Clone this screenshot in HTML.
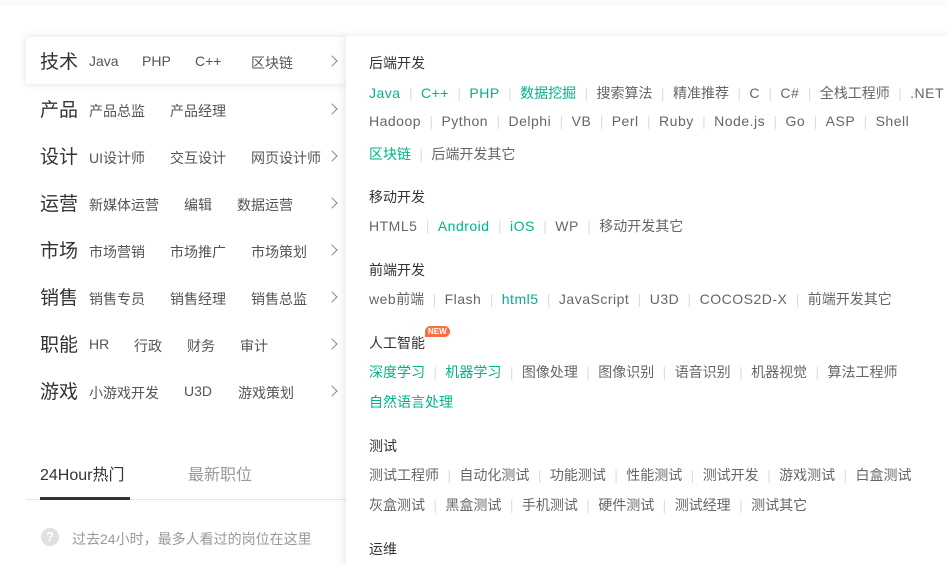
<!DOCTYPE html>
<html><head><meta charset="utf-8"><style>
*{margin:0;padding:0;box-sizing:border-box}
body{width:947px;height:548px;overflow:hidden;background:#fff;font-family:"Liberation Sans","Noto Sans CJK SC",sans-serif;position:relative;color:#333}
.top{position:absolute;left:0;top:0;width:947px;height:6px;background:#fafafa}
.row{position:absolute;left:26px;width:320px;height:47px;font-size:14px;color:#555}
.row.act{background:#fff;box-shadow:0 0 8px rgba(0,0,0,.12);z-index:1}
.row .cat{position:absolute;left:14px;top:10px;font-size:19px;color:#333}
.row span.s{position:absolute;top:16px}
.row .ch{position:absolute;left:302px;top:20px;width:8px;height:8px;border-right:1.3px solid #888;border-top:1.3px solid #888;transform:rotate(45deg)}
.right{position:absolute;left:346px;top:36px;width:620px;height:530px;background:#fff;box-shadow:-3px 0 8px rgba(0,0,0,.08);z-index:2}
.h{position:absolute;left:23px;font-size:14px;color:#333}
.l{position:absolute;left:23px;font-size:14px;color:#666;white-space:nowrap}
.l i{font-style:normal;color:#ddd;margin:0 8.4px}
.l b{font-weight:normal;letter-spacing:.5px}
.g{color:#00b38a}
.tab{position:absolute;font-size:16px}
</style></head><body>
<div class="top"></div>
<div class="row act" style="top:37px"><span class="cat">技术</span><span class="s" style="left:63px">Java</span><span class="s" style="left:116px">PHP</span><span class="s" style="left:169px">C++</span><span class="s" style="left:225px">区块链</span><b class="ch"></b></div>
<div class="row" style="top:85px"><span class="cat">产品</span><span class="s" style="left:63px">产品总监</span><span class="s" style="left:144px">产品经理</span><b class="ch"></b></div>
<div class="row" style="top:132px"><span class="cat">设计</span><span class="s" style="left:63px">UI设计师</span><span class="s" style="left:144px">交互设计</span><span class="s" style="left:225px">网页设计师</span><b class="ch"></b></div>
<div class="row" style="top:179px"><span class="cat">运营</span><span class="s" style="left:63px">新媒体运营</span><span class="s" style="left:158px">编辑</span><span class="s" style="left:211px">数据运营</span><b class="ch"></b></div>
<div class="row" style="top:226px"><span class="cat">市场</span><span class="s" style="left:63px">市场营销</span><span class="s" style="left:144px">市场推广</span><span class="s" style="left:225px">市场策划</span><b class="ch"></b></div>
<div class="row" style="top:273px"><span class="cat">销售</span><span class="s" style="left:63px">销售专员</span><span class="s" style="left:144px">销售经理</span><span class="s" style="left:225px">销售总监</span><b class="ch"></b></div>
<div class="row" style="top:320px"><span class="cat">职能</span><span class="s" style="left:63px">HR</span><span class="s" style="left:108px">行政</span><span class="s" style="left:161px">财务</span><span class="s" style="left:214px">审计</span><b class="ch"></b></div>
<div class="row" style="top:367px"><span class="cat">游戏</span><span class="s" style="left:63px">小游戏开发</span><span class="s" style="left:158px">U3D</span><span class="s" style="left:212px">游戏策划</span><b class="ch"></b></div>
<div class="tab" style="left:40px;top:461px;color:#333">24Hour热门</div>
<div class="tab" style="left:188px;top:461px;color:#999">最新职位</div>
<div style="position:absolute;left:26px;top:499px;width:320px;height:1px;background:#e5e5e5"></div>
<div style="position:absolute;left:40px;top:497px;width:90px;height:3px;background:#333"></div>
<div style="position:absolute;left:41px;top:528px;width:18px;height:18px;border-radius:50%;background:#e0e0e0;color:#fff;font-size:13px;text-align:center;line-height:18px;font-weight:bold">?</div>
<div style="position:absolute;left:72px;top:529px;font-size:14px;color:#999">过去24小时，最多人看过的岗位在这里</div>
<div class="right">
<div class="h" style="top:17px">后端开发</div>
<div class="l" style="top:47px"><b class="g">Java</b><i>|</i><b class="g">C++</b><i>|</i><b class="g">PHP</b><i>|</i><span class="g">数据挖掘</span><i>|</i>搜索算法<i>|</i>精准推荐<i>|</i><b>C</b><i>|</i><b>C#</b><i>|</i>全栈工程师<i>|</i><b>.NET</b></div>
<div class="l" style="top:77px"><b>Hadoop</b><i>|</i><b>Python</b><i>|</i><b>Delphi</b><i>|</i><b>VB</b><i>|</i><b>Perl</b><i>|</i><b>Ruby</b><i>|</i><b>Node.js</b><i>|</i><b>Go</b><i>|</i><b>ASP</b><i>|</i><b>Shell</b></div>
<div class="l" style="top:108px"><span class="g">区块链</span><i>|</i>后端开发其它</div>
<div class="h" style="top:151px">移动开发</div>
<div class="l" style="top:180px"><b>HTML5</b><i>|</i><b class="g">Android</b><i>|</i><b class="g">iOS</b><i>|</i><b>WP</b><i>|</i>移动开发其它</div>
<div class="h" style="top:224px">前端开发</div>
<div class="l" style="top:253px"><b>web</b>前端<i>|</i><b>Flash</b><i>|</i><b class="g">html5</b><i>|</i><b>JavaScript</b><i>|</i><b>U3D</b><i>|</i><b>COCOS2D-X</b><i>|</i>前端开发其它</div>
<div class="h" style="top:297px">人工智能</div>
<div style="position:absolute;left:79px;top:290px;background:#f96f3f;color:#fff;font-size:8px;font-weight:bold;padding:1px 3px;border-radius:7px 7px 7px 0;line-height:9px">NEW</div>
<div class="l" style="top:326px"><span class="g">深度学习</span><i>|</i><span class="g">机器学习</span><i>|</i>图像处理<i>|</i>图像识别<i>|</i>语音识别<i>|</i>机器视觉<i>|</i>算法工程师</div>
<div class="l" style="top:356px"><span class="g">自然语言处理</span></div>
<div class="h" style="top:400px">测试</div>
<div class="l" style="top:429px">测试工程师<i>|</i>自动化测试<i>|</i>功能测试<i>|</i>性能测试<i>|</i>测试开发<i>|</i>游戏测试<i>|</i>白盒测试</div>
<div class="l" style="top:459px">灰盒测试<i>|</i>黑盒测试<i>|</i>手机测试<i>|</i>硬件测试<i>|</i>测试经理<i>|</i>测试其它</div>
<div class="h" style="top:503px">运维</div>
</div>
</body></html>
